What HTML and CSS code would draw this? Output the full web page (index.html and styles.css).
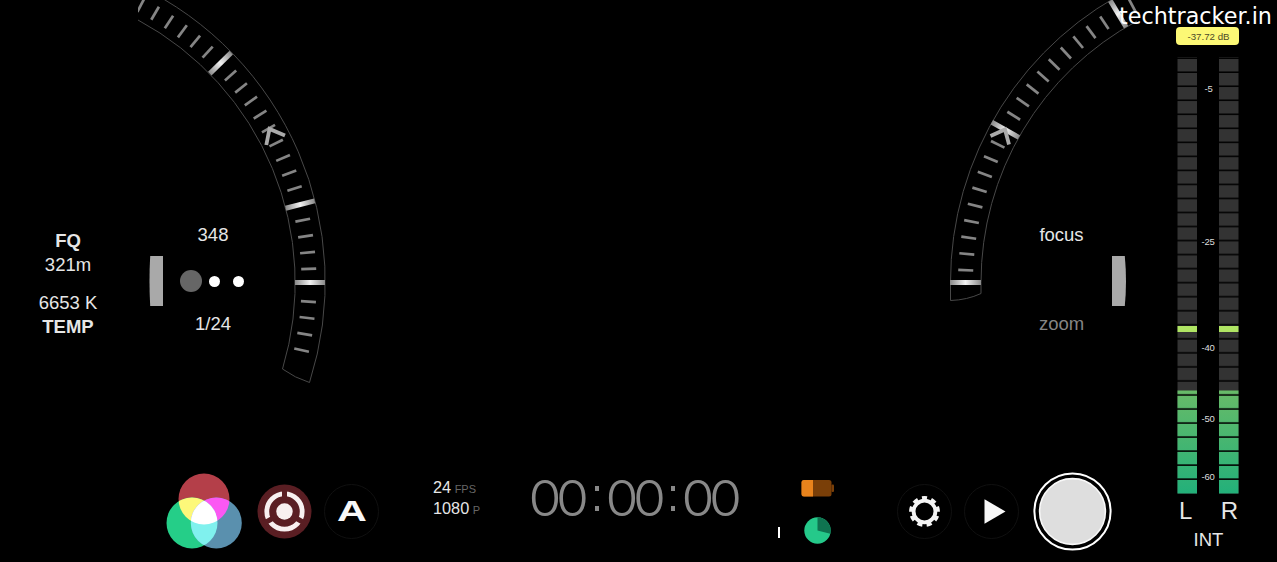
FILE: index.html
```html
<!DOCTYPE html>
<html lang="en">
<head>
<meta charset="utf-8">
<title>Camera</title>
<link rel="stylesheet" href="styles.css">
</head>
<body>
<main class="app">
  <section class="stage">
    <div class="viewfinder">
      <div class="readout">
        <div class="readout-item"><b>FQ</b><span>321m</span></div>
        <div class="readout-item"><span>6653 K</span><b>TEMP</b></div>
      </div>
      <svg class="grip" viewBox="0 0 15 50"><path d="M1.2 0H14V50H1.2Q-.2 25 1.2 0Z"/></svg>
      <div class="exposure">
        <span>348</span>
        <div class="dots"><i class="dot dot-large"></i><i class="dot"></i><i class="dot"></i></div>
        <span>1/24</span>
      </div>
      <div class="lens"><span>focus</span><span class="muted">zoom</span></div>
      <svg class="grip" viewBox="0 0 15 50"><path d="M0 0H12.8Q15.2 25 12.8 50H0Z"/></svg>
    </div>
    <div class="toolbar">
      <svg class="rgb" viewBox="0 0 78 78">
        <defs>
          <clipPath id="clip-red"><circle cx="39" cy="27" r="25.5"/></clipPath>
          <clipPath id="clip-green"><circle cx="27" cy="51" r="25.5"/></clipPath>
        </defs>
        <circle cx="39" cy="27" r="25.5" fill="#b43f49"/>
        <circle cx="27" cy="51" r="25.5" fill="#25ce88"/>
        <circle cx="51.3" cy="51" r="25.5" fill="#5a90ae"/>
        <circle cx="27" cy="51" r="25.5" fill="#fdf87a" clip-path="url(#clip-red)"/>
        <circle cx="51.3" cy="51" r="25.5" fill="#fb58f3" clip-path="url(#clip-red)"/>
        <g clip-path="url(#clip-green)">
          <circle cx="51.3" cy="51" r="25.5" fill="#80f1ee"/>
          <circle cx="51.3" cy="51" r="25.5" fill="#fff" clip-path="url(#clip-red)"/>
        </g>
      </svg>
      <svg class="round target" viewBox="-27.5 -27.5 55 55">
        <circle r="27" fill="#5a1e23"/>
        <circle r="17.7" fill="none" stroke="#f8f0f0" stroke-width="4.8"/>
        <path d="M0 0V-24M0 0L20.8 12M0 0L-20.8 12" stroke="#5a1e23" stroke-width="5"/>
        <circle r="8.2" fill="#f8f0f0"/>
      </svg>
      <div class="round auto"><span>A</span></div>
      <div class="format">
        <div>24 <small>FPS</small></div>
        <div>1080 <small>P</small></div>
      </div>
      <div class="timer"><span>00</span><i></i><span>00</span><i></i><span>00</span></div>
      <i class="mark"></i>
      <div class="status">
        <svg class="battery" viewBox="0 0 33 17">
          <rect x=".5" width="30" height="16.5" rx="2.5" fill="#7a3f08"/>
          <rect x="30.5" y="4.5" width="2.5" height="7.5" rx="1" fill="#7a3f08"/>
          <path d="M3 0H12V16.5H3Q.5 16.5.5 14V2.5Q.5 0 3 0Z" fill="#e8831c"/>
        </svg>
        <svg class="pie" viewBox="-13.5 -13.5 27 27">
          <circle r="13.2" fill="#25c98a"/>
          <path d="M0 0V-13.2A13.2 13.2 0 0 1 12.8 3.3Z" fill="#0f7350"/>
        </svg>
      </div>
      <svg class="round gear" viewBox="-27.5 -27.5 55 55">
        <circle r="27" fill="none" stroke="#101010"/>
        <circle r="10.9" fill="none" stroke="#f4f4f4" stroke-width="3.8"/>
        <circle r="13.7" fill="none" stroke="#f4f4f4" stroke-width="3.4" pathLength="90" stroke-dasharray="5.4 4.6" stroke-dashoffset="-4.8"/>
      </svg>
      <svg class="round play" viewBox="-27.5 -27.5 55 55">
        <circle r="27" fill="none" stroke="#101010"/>
        <path d="M-7-12.3L14 0L-7 12.3Z" fill="#f8f8f8"/>
      </svg>
      <svg class="record" viewBox="-39.5 -39.5 79 79">
        <circle r="38.1" fill="none" stroke="#fff" stroke-width="2"/>
        <circle r="32.9" fill="#dedede" stroke="#f8f8f8" stroke-width="1.6"/>
      </svg>
    </div>
    <svg class="dials" viewBox="0 0 1137 450">
      <defs>
        <linearGradient id="shine"><stop offset="0" stop-color="#8a8a8a"/><stop offset=".5" stop-color="#f2f2f2"/><stop offset="1" stop-color="#8a8a8a"/></linearGradient>
        <clipPath id="left-edge"><rect x="138" width="200" height="450"/></clipPath>
      </defs>
      <g clip-path="url(#left-edge)">
        <path class="rim" d="M138-14.5A328.5 328.5 0 0 1 309.5 382.5Q295 378 282.5 369A298.5 298.5 0 0 0 138 20"/>
        <g id="left-ticks" transform="translate(-3.5 282.5)"></g>
        <path class="arrow" d="M266.3 145L269.5 129L285 135.5"/>
      </g>
      <path class="rim" d="M1137-14A328 328 0 0 0 950.5 282.5V300.5Q967 300 981 293.5V282.5A297 297 0 0 1 1137 21"/>
      <g id="right-ticks" transform="translate(1278 282.5)"></g>
      <path class="arrow" d="M990.5 136L1005 129.5L1009 144.5"/>
    </svg>
  </section>
  <aside class="audio">
    <div class="level">-37.72 dB</div>
    <svg class="meter" viewBox="0 0 62 437">
      <defs>
        <linearGradient id="signal" x1="0" y1="0" x2="0" y2="1"><stop offset="0" stop-color="#68bb68"/><stop offset="1" stop-color="#23b07a"/></linearGradient>
        <pattern id="gaps" width="62" height="14.03" y="2" patternUnits="userSpaceOnUse"><rect y="12.5" width="62" height="1.53" fill="#000"/></pattern>
      </defs>
      <path d="M.5 0H20V436.5H.5ZM42 0H61.5V436.5H42Z" fill="#333"/>
      <path d="M.5 333.5H20V436.5H.5ZM42 333.5H61.5V436.5H42Z" fill="url(#signal)"/>
      <rect width="62" height="434" fill="url(#gaps)"/>
      <path d="M.5 269H20V275H.5ZM42 269H61.5V275H42Z" fill="#b0e564"/>
      <g class="scale">
        <text x="31.5" y="35">-5</text>
        <text x="31" y="188">-25</text>
        <text x="31" y="293.5">-40</text>
        <text x="31" y="365">-50</text>
        <text x="31" y="422.5">-60</text>
      </g>
    </svg>
    <div class="channels"><span>L</span><span>R</span></div>
    <div class="input">INT</div>
  </aside>
  <div class="watermark">techtracker.in</div>
</main>
<script src="dials.js"></script>
</body>
</html>
```
FILE: styles.css
```css
* { box-sizing: border-box; }
body {
  margin: 0;
  background: #000;
  color: #e6e6e6;
  font-family: "Liberation Sans", Arial, sans-serif;
  font-size: 18.5px;
  overflow: hidden;
}
svg { display: block; flex: none; }
.app { position: relative; display: flex; width: 1277px; height: 562px; }
.stage { position: relative; width: 1137px; display: flex; flex-direction: column; }
.dials { position: absolute; left: 0; top: 0; width: 1137px; height: 450px; pointer-events: none; }
.rim { fill: none; stroke: #484848; stroke-width: 1; }
.tick { stroke: #858585; stroke-width: 2.7; }
.major { fill: url(#shine); }
.arrow { fill: none; stroke: #aaa; stroke-width: 3.8; }

.viewfinder { height: 450px; padding-top: 112px; display: flex; align-items: center; }
.readout { width: 136px; height: 120px; display: flex; flex-direction: column; gap: 15px; align-items: center; padding-top: 8px; }
.readout-item { display: flex; flex-direction: column; align-items: center; line-height: 23.5px; }
.grip { width: 15px; height: 50px; fill: #a9a9a9; }
.readout + .grip { margin-left: 13px; }
.exposure, .lens { height: 112px; padding-bottom: 3px; display: flex; flex-direction: column; justify-content: space-between; align-items: center; line-height: 20px; }
.exposure { width: 98px; }
.dots { display: flex; align-items: center; align-self: flex-start; gap: 12.5px; margin: 3px 0 0 16px; }
.dot { width: 11px; height: 11px; border-radius: 50%; background: #fff; }
.dot-large { width: 22px; height: 22px; margin-right: -5.5px; background: #666; }
.lens { margin-left: 777px; width: 45px; }
.lens + .grip { margin-left: 28px; }
.muted { color: #858585; }

.toolbar { height: 112px; padding: 10px 0 0 165px; display: flex; align-items: center; }
.rgb { width: 78px; height: 78px; }
.round { width: 55px; height: 55px; flex: none; }
.target { margin-left: 14px; }
.auto { margin-left: 12px; border: 1px solid #101010; border-radius: 50%; display: flex; align-items: center; justify-content: center; }
.auto span { font: 700 30px/30px "Liberation Sans", Arial, sans-serif; color: #f8f8f8; transform: scaleX(1.38); }
.format { width: 99px; margin-left: 54px; margin-top: -24px; font-size: 16.3px; line-height: 19px; white-space: nowrap; }
.format small { font-size: 11px; color: #666; margin-left: -1px; }
.timer { width: 206px; display: flex; align-items: center; justify-content: space-between; height: 50px; margin-top: -25px; color: #888; font: 300 49px/50px Inter, "Liberation Sans", sans-serif; }
.timer span { width: 54px; letter-spacing: -5px; text-align: center; margin-right: -1px; transform: translateX(-3px) scaleX(1.09); }
.timer i { width: 4px; height: 25px; border: solid #888; border-width: 5px 0; }
.mark { width: 2px; height: 11px; background: #fff; margin: 43px 0 0 40px; }
.status { width: 33px; margin-left: 21px; height: 65px; display: flex; flex-direction: column; align-items: center; justify-content: space-between; padding-top: 1px; }
.battery { width: 33px; height: 17px; }
.pie { width: 27px; height: 27px; }
.gear { margin-left: 63px; }
.play { margin-left: 12px; }
.record { width: 79px; height: 79px; margin-left: 14px; }

.audio { width: 140px; display: flex; flex-direction: column; align-items: center; padding: 27px 0 0 1px; }
.level { width: 63px; height: 18px; border-radius: 4px; background: #fcf875; color: #4c4b28; font-size: 9.7px; line-height: 19px; text-align: center; padding-left: 2px; }
.meter { width: 62px; height: 437px; margin-top: 12px; }
.scale text { fill: #ddd; font-size: 9.5px; text-anchor: middle; letter-spacing: -.3px; }
.channels { width: 59px; display: flex; justify-content: space-between; margin: 4px 0 0 2px; font-size: 24px; line-height: 26px; }
.input { line-height: 20px; margin: 6px 0 0 2px; }
.watermark { position: absolute; right: 5px; top: 2px; font: 22.3px/28px "DejaVu Sans", sans-serif; color: #fff; }
```
FILE: dials.js
```js
const NS = "http://www.w3.org/2000/svg";

// Adds one graduation, rotated about the centre of the dial.
function addMark(group, side, angle, radius, length, major) {
  const mark = document.createElementNS(NS, major ? "rect" : "line");
  const start = side * radius - length / 2;
  if (major) {
    mark.setAttribute("x", start);
    mark.setAttribute("y", -2.5);
    mark.setAttribute("width", length);
    mark.setAttribute("height", 5);
    mark.setAttribute("class", "major");
  } else {
    mark.setAttribute("x1", start);
    mark.setAttribute("x2", start + length);
    mark.setAttribute("class", "tick");
  }
  mark.setAttribute("transform", `rotate(${-side * angle})`);
  group.appendChild(mark);
}

const left = document.getElementById("left-ticks");
for (let i = -4; i <= 21; i++) {
  if (i === 0 || i === 5 || i === 15) continue;
  addMark(left, 1, i * 3 - 0.5, 312.5, 15, false);
}
[0, 14.4, 44.4].forEach(a => addMark(left, 1, a, 313.5, 30, true));

const right = document.getElementById("right-ticks");
for (let a = 2.25; a < 64; a += 3) {
  if (a !== 29.25 && a !== 59.25) addMark(right, -1, a, 312.5, 15, false);
}
[0, 29.25, 59.25].forEach(a => addMark(right, -1, a, 312.5, 31, true));
```
